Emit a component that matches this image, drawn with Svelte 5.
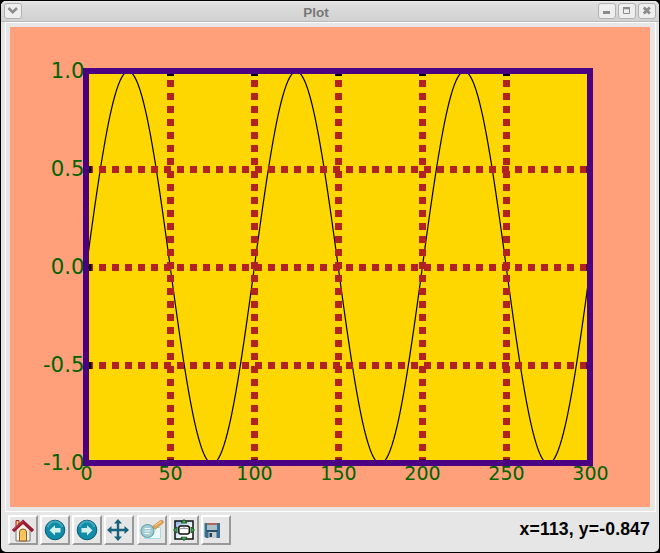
<script>
  const xTicks = [0, 50, 100, 150, 200, 250, 300];
  const yTicks = [1, 0.5, 0, -0.5, -1];
  const px = (v) => 76.5 + v * 1.68;
  const py = (v) => 240.5 - v * 196;
  const curve = Array.from({ length: 301 }, (_, i) =>
    `${(px(i) - 0.2).toFixed(2)},${py(Math.sin((i * Math.PI) / 50)).toFixed(2)}`
  ).join(' ');
</script>

<div class="desk">
  <div class="window">
    <header>
      <button class="ctl" aria-label="Menu"><svg width="16" height="14"><path d="M3.500 4l4.200 4.200L12 4" fill="none" stroke="#8c8c8c" stroke-width="2.6" /></svg></button>
      <h1>Plot</h1>
      <div class="group">
        <button class="ctl" aria-label="Minimize"><svg width="16" height="14"><path d="M4 7h7v3h-7z" fill="#8c8c8c" /></svg></button>
        <button class="ctl" aria-label="Maximize"><svg width="16" height="14"><path d="M4.500 3.500h6v6h-6z" fill="none" stroke="#8c8c8c" /><path d="M4 3h7v2.300h-7z" fill="#8c8c8c" /></svg></button>
        <button class="ctl" aria-label="Close"><svg width="16" height="14"><path d="M4.800 3.500l6 6M10.800 3.500l-6 6" fill="none" stroke="#8c8c8c" stroke-width="2.700" /></svg></button>
      </div>
    </header>

    <div class="frame">
      <svg class="plot" width="640" height="480" viewBox="0 0 640 480">
        <rect width="640" height="480" fill="#ffa07a" />
        <rect x="76" y="44" width="504" height="392" fill="#ffd700" />
        <svg x="76" y="44" width="504" height="392" viewBox="76 44 504 392">
          <polyline points={curve} fill="none" stroke="#000" stroke-width="1.2" />
          {#each xTicks.slice(1, 6) as t}
            <path d="M{px(t)} 437V44" class="grid" />
          {/each}
          {#each yTicks.slice(1, 4) as t}
            <path d="M76 {py(t)}H580" class="grid" />
          {/each}
        </svg>
        {#each xTicks.slice(1, 6) as t}
          <path d="M{px(t)} 44v5M{px(t)} 436v-3.5" class="tick" />
        {/each}
        {#each yTicks.slice(1, 4) as t}
          <path d="M76 {py(t)}h5.500M580 {py(t)}h-3.500" class="tick" />
        {/each}
        <rect x="76" y="44" width="504" height="392" fill="none" stroke="#4b0082" stroke-width="6" />
        {#each xTicks as t}
          <text x={px(t)} y="453" text-anchor="middle" font-size="19">{t}</text>
        {/each}
        {#each yTicks as t}
          <text x="74.5" y={py(t) + 6.8} text-anchor="end" font-size="21.3">{t.toFixed(1)}</text>
        {/each}
      </svg>
    </div>

    <footer>
      <div class="tools">
        <button class="tool" aria-label="Home">
          <svg width="24" height="24"><path d="M5 2.500h3v6h-3z" fill="#f5cf65" stroke="#982840" /><path d="M5 11L12 5l7 7v11H5z" fill="#f6f2e8" stroke="#777" /><path d="M8.500 23v-9q0-3 3.500-3t3.500 3v9z" fill="#fcc35a" stroke="#886030" /><path d="M2 13L12 3.800l10 9.200" fill="none" stroke="#991c35" stroke-width="3.400" /><path d="M2.500 11.300L12 3" stroke="#d85060" stroke-width=".8" /></svg>
        </button>
        <button class="tool" aria-label="Back">
          <svg width="24" height="24"><circle cx="12" cy="12" r="9.800" fill="#108ca8" stroke="#0b5b75" /><path d="M4.500 9q2.500-5.500 7.500-5.500t7.500 5.500" fill="none" stroke="#45a9be" stroke-width="2" /><path d="M6.500 12.300l5.500-5v2.700h5.500v4.600H12v2.900z" fill="#d3f0f0" /></svg>
        </button>
        <button class="tool" aria-label="Forward">
          <svg width="24" height="24"><circle cx="12" cy="12" r="9.800" fill="#108ca8" stroke="#0b5b75" /><path d="M4.500 9q2.500-5.500 7.500-5.500t7.500 5.500" fill="none" stroke="#45a9be" stroke-width="2" /><path d="M17.500 12.300l-5.500-5v2.700H6.500v4.600H12v2.900z" fill="#d3f0f0" /></svg>
        </button>
        <button class="tool" aria-label="Pan">
          <svg width="24" height="24" viewBox="1 0 24 24"><path d="M12 1l4 4.500H13.200v5.300h5.300V8l4.500 4-4.500 4V13.200h-5.300v5.300H16L12 23l-4-4.500h2.800v-5.300H5.500V16L1 12l4.500-4v2.800h5.300V5.500H8z" fill="#17627c" /></svg>
        </button>
        <button class="tool" aria-label="Zoom">
          <svg width="24" height="24"><path d="M4.500 9.500h16v11h-16z" fill="#edfafb" stroke="#a5dce5" /><path d="M12.500 8.500L20.500 2.500q2.800-.8 3 2L15 11.500z" fill="#e6a354" stroke="#b97833" stroke-width=".6" /><path d="M15 7.500L21.500 3" stroke="#f7d59e" /><circle cx="7.500" cy="13" r="6.500" fill="#a3cbd1" stroke="#68a5ad" stroke-width="1.200" /><path d="M4.500 10.500h6M4.500 13h6M4.500 15.500h5" stroke="#edfafa" /></svg>
        </button>
        <button class="tool" aria-label="Subplots">
          <svg width="24" height="24"><defs><linearGradient id="pane" x2="1" y2="1"><stop stop-color="#86aee4" /><stop offset=".65" stop-color="#fff" /></linearGradient></defs><rect x="3" y="3" width="18" height="18" fill="url(#pane)" stroke="#111" stroke-width="1.500" /><rect x="6.800" y="8" width="10.500" height="8" rx="2" fill="#fff" stroke="#111" stroke-width="1.500" /><path d="M8 10.500h8.300M12 8.500v2" stroke="#99a" /><path d="M12 1.500l3 3.500H9zM12 22.700l3-3.500H9zM1.500 12l3.500-3v6zM22.500 12l-3.500-3v6z" fill="#42b54a" stroke="#14551c" stroke-width=".9" /></svg>
        </button>
        <button class="tool" aria-label="Save">
          <svg width="24" height="24"><path d="M.5 5H16v15H2L.5 18.500z" fill="#376e91" /><path d="M3 5h10v7H3z" fill="#aabfc9" /><path d="M3 5h10v2H3z" fill="#a96858" /><path d="M2.500 12h11v2h-11z" fill="#254f6d" /><path d="M4.500 14h8v6h-8z" fill="#c5cbcc" /><path d="M5.500 15h2.500v4H5.500z" fill="#244357" /></svg>
        </button>
      </div>
      <output>x=113, y=-0.847</output>
    </footer>
  </div>
</div>

<style>
  .desk { width: 660px; height: 553px; background: #000; box-sizing: border-box; padding: 1px; overflow: hidden; }
  .window { height: 551px; width: 658px; background: #e6e6e6; border-radius: 5px; box-sizing: border-box; overflow: hidden; font-family: "Liberation Sans", sans-serif; }
  header { height: 21px; box-sizing: border-box; display: flex; align-items: flex-start; justify-content: space-between; padding: 2px 3px 0; background: linear-gradient(#f0f0f0, #dedede 2px, #d2d2d2); border-bottom: 1px solid #b9b9b9; }
  h1 { margin: 0; flex: 1; text-align: center; font-size: 13.5px; line-height: 19px; color: #777; padding-left: 12px; }
  .group { display: flex; gap: 2px; }
  .ctl { width: 18px; height: 16px; box-sizing: border-box; padding: 0; border: 1px solid #b2b2b2; border-radius: 3px; background: #eee; }
  .ctl svg { display: block; }
  .frame { height: 490px; box-sizing: border-box; border: 1px solid #fff; margin: 0 3px 0 4px; padding: 4px; }
  .plot { display: block; }
  .plot text { font-family: "DejaVu Sans", sans-serif; fill: #006400; }
  .grid { fill: none; stroke: #b22222; stroke-width: 7; stroke-dasharray: 7 6; }
  .tick { stroke: #000; stroke-width: 7; }
  footer { display: flex; justify-content: space-between; padding: 3px 9px 0 7px; }
  .tools { display: flex; gap: 2.15px; }
  .tool { width: 30px; height: 30px; box-sizing: border-box; padding: 1px; background: #e6e6e6; border: 2px solid; border-color: #fff #999 #999 #fff; }
  .tool svg { display: block; }
  output { font-weight: bold; font-size: 17.6px; letter-spacing: .15px; line-height: 28px; color: #000; }
</style>
